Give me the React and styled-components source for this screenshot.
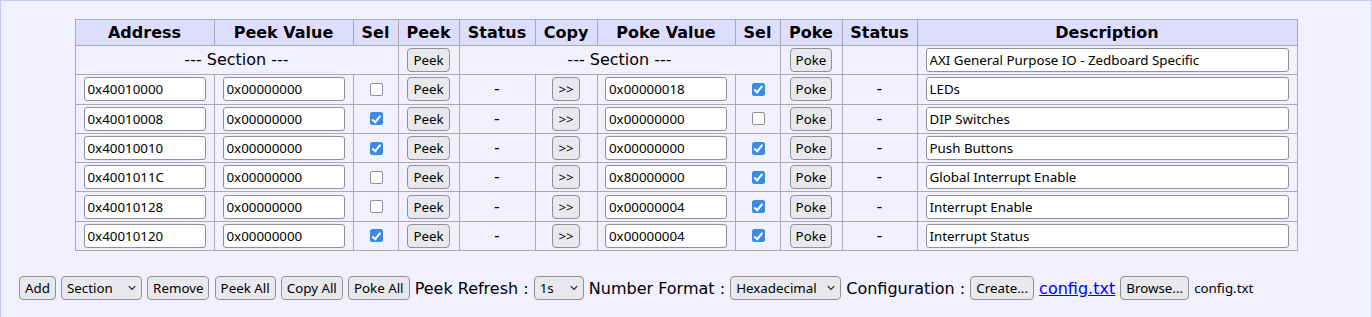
import React from "react";
import styled, { createGlobalStyle } from "styled-components";

const Global = createGlobalStyle`
  html, body { margin: 0; padding: 0; }
  body { font-family: "DejaVu Sans", Verdana, sans-serif; font-size: 16px; color: #000; background: #f0f0ff; }
  * { box-sizing: border-box; }
`;

const Page = styled.div`
  border: 1px solid #c8c8ff;
  background: #f0f0ff;
  min-height: 100vh;
  padding: 18px 18px 17px 18px;
  display: flex;
  flex-direction: column;
  gap: 25px;
`;

const Table = styled.table`
  border-collapse: collapse;
  table-layout: fixed;
  width: 1222px;
  margin: 0 auto;
`;

const Col = styled.col`
  width: ${(p) => p.$w}px;
`;

const Th = styled.th`
  background: #ddddff;
  border: 1px solid #aaaaaa;
  font-weight: bold;
  font-size: 16px;
  padding: 3px 0;
  text-align: center;
  white-space: nowrap;
`;

const Td = styled.td`
  border: 1px solid #aaaaaa;
  padding: 2.15px ${(p) => (p.$fill ? 8 : 0)}px;
  text-align: center;
  vertical-align: middle;
  white-space: nowrap;
  line-height: 24px;
  height: 29.3px;
`;

const TextInput = styled.input`
  display: ${(p) => (p.$fill ? "block" : "inline-block")};
  width: ${(p) => (p.$fill ? "100%" : "122px")};
  height: 24px;
  margin: 0 auto;
  padding: 0 3px;
  border: 1px solid #8f8f9d;
  border-radius: 3px;
  background: #fff;
  font-family: "Noto Sans", sans-serif;
  font-size: 13.333px;
  color: #000;
  vertical-align: top;
  outline: none;
`;

const Button = styled.button`
  height: 24px;
  padding: 0 5px;
  border: 1px solid #8f8f9d;
  border-radius: 4px;
  background: #e9e9ed;
  font-family: "Noto Sans", sans-serif;
  font-size: 13.333px;
  color: #000;
  vertical-align: top;
  cursor: pointer;
`;

const Check = styled.input.attrs({ type: "checkbox" })`
  appearance: none;
  -webkit-appearance: none;
  width: 13px;
  height: 13px;
  margin: 5.5px 0 0 1px;
  border: 1.5px solid #8f8f9d;
  border-radius: 2px;
  background: #fff;
  vertical-align: top;
  position: relative;
  &:checked {
    background: #3c8ce7;
    border-color: #3c8ce7;
  }
  &:checked::after {
    content: "";
    position: absolute;
    left: 3.2px;
    top: 0.5px;
    width: 3px;
    height: 6.5px;
    border: solid #fff;
    border-width: 0 2px 2px 0;
    transform: rotate(40deg);
  }
`;

const Toolbar = styled.div`
  display: flex;
  align-items: center;
  gap: 5.1px;
  height: 24px;
`;

const Label = styled.span`
  font-size: 16px;
  white-space: nowrap;
`;

const SelectWrap = styled.span`
  position: relative;
  display: inline-flex;
  width: ${(p) => p.$w}px;
  height: 24px;
`;

const Select = styled.select`
  appearance: none;
  -webkit-appearance: none;
  width: 100%;
  height: 24px;
  padding: 0 0 0 5px;
  border: 1px solid #8f8f9d;
  border-radius: 4px;
  background: #e9e9ed;
  font-family: "Noto Sans", sans-serif;
  font-size: 13.333px;
  color: #000;
  outline: none;
`;

const Chevron = styled.svg`
  position: absolute;
  right: 6px;
  top: 9px;
  pointer-events: none;
`;

const Link = styled.a`
  color: #0000ee;
  text-decoration: underline;
  font-size: 16px;
`;

const FileName = styled.span`
  font-family: "Noto Sans", sans-serif;
  font-size: 13.333px;
`;

const colWidths = [139, 139, 45, 61, 76, 62, 138, 45, 62, 75, 380];

const rows = [
  ["0x40010000", "0x00000000", false, "0x00000018", true, "LEDs"],
  ["0x40010008", "0x00000000", true, "0x00000000", false, "DIP Switches"],
  ["0x40010010", "0x00000000", true, "0x00000000", true, "Push Buttons"],
  ["0x4001011C", "0x00000000", false, "0x80000000", true, "Global Interrupt Enable"],
  ["0x40010128", "0x00000000", false, "0x00000004", true, "Interrupt Enable"],
  ["0x40010120", "0x00000000", true, "0x00000004", true, "Interrupt Status"],
];

function Dropdown({ w, value, options }) {
  return (
    <SelectWrap $w={w}>
      <Select defaultValue={value}>
        {options.map((o) => (
          <option key={o}>{o}</option>
        ))}
      </Select>
      <Chevron width="8" height="6" viewBox="0 0 8 6">
        <path d="M0.8 1.2 L4 4.4 L7.2 1.2" fill="none" stroke="#222" strokeWidth="1.2" />
      </Chevron>
    </SelectWrap>
  );
}

export default function App() {
  return (
    <>
      <Global />
      <Page>
        <Table>
          <colgroup>
            {colWidths.map((w, i) => (
              <Col key={i} $w={w} />
            ))}
          </colgroup>
          <thead>
            <tr>
              <Th>Address</Th>
              <Th>Peek Value</Th>
              <Th>Sel</Th>
              <Th>Peek</Th>
              <Th>Status</Th>
              <Th>Copy</Th>
              <Th>Poke Value</Th>
              <Th>Sel</Th>
              <Th>Poke</Th>
              <Th>Status</Th>
              <Th>Description</Th>
            </tr>
          </thead>
          <tbody>
            <tr>
              <Td colSpan={3}>--- Section ---</Td>
              <Td>
                <Button>Peek</Button>
              </Td>
              <Td colSpan={4}>--- Section ---</Td>
              <Td>
                <Button>Poke</Button>
              </Td>
              <Td></Td>
              <Td $fill>
                <TextInput $fill defaultValue="AXI General Purpose IO - Zedboard Specific" />
              </Td>
            </tr>
            {rows.map((r, i) => (
              <tr key={i}>
                <Td>
                  <TextInput defaultValue={r[0]} />
                </Td>
                <Td>
                  <TextInput defaultValue={r[1]} />
                </Td>
                <Td>
                  <Check defaultChecked={r[2]} />
                </Td>
                <Td>
                  <Button>Peek</Button>
                </Td>
                <Td>-</Td>
                <Td>
                  <Button>&gt;&gt;</Button>
                </Td>
                <Td>
                  <TextInput defaultValue={r[3]} />
                </Td>
                <Td>
                  <Check defaultChecked={r[4]} />
                </Td>
                <Td>
                  <Button>Poke</Button>
                </Td>
                <Td>-</Td>
                <Td $fill>
                  <TextInput $fill defaultValue={r[5]} />
                </Td>
              </tr>
            ))}
          </tbody>
        </Table>
        <Toolbar>
          <Button>Add</Button>
          <Dropdown w={81} value="Section" options={["Section", "Register"]} />
          <Button>Remove</Button>
          <Button>Peek All</Button>
          <Button>Copy All</Button>
          <Button>Poke All</Button>
          <Label>Peek Refresh :</Label>
          <Dropdown w={50} value="1s" options={["Off", "1s", "2s", "5s"]} />
          <Label>Number Format :</Label>
          <Dropdown w={111} value="Hexadecimal" options={["Hexadecimal", "Decimal"]} />
          <Label>Configuration :</Label>
          <Button>Create...</Button>
          <Link href="#">config.txt</Link>
          <Button>Browse...</Button>
          <FileName>config.txt</FileName>
        </Toolbar>
      </Page>
    </>
  );
}
